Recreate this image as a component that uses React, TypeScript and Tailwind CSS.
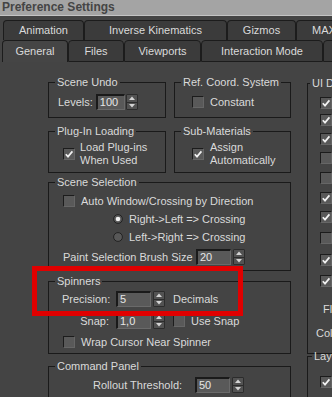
import React from "react";

function CheckBox({ checked }: { checked?: boolean }) {
  return (
    <span className="relative block w-[12px] h-[12px] shrink-0 bg-[#595959] border border-[#1c1c1c] border-r-[#666666] border-b-[#666666]">
      {checked && (
        <svg viewBox="0 0 10 10" className="absolute inset-0 w-[10px] h-[10px]">
          <path d="M1.8 5.2 L4 7.6 L8.4 2.4" stroke="#f2f2f2" strokeWidth="1.7" fill="none" />
        </svg>
      )}
    </span>
  );
}

function Radio({ on }: { on?: boolean }) {
  return (
    <svg width="10" height="10" viewBox="0 0 10 10" className="shrink-0 block">
      <circle cx="5" cy="5" r="4.4" fill="#585858" stroke="#222222" strokeWidth="1" />
      {on && <circle cx="5" cy="5" r="2.3" fill="#f0f0f0" />}
    </svg>
  );
}

function Field({ value, cls }: { value: string; cls: string }) {
  return (
    <div
      className={`h-[16px] shrink-0 flex items-center bg-[#595959] border-t-2 border-l-2 border-r border-b border-[#1a1a1a] border-r-[#6a6a6a] border-b-[#6a6a6a] pl-[2px] text-[#e6e6e6] ${cls}`}
    >
      {value}
    </div>
  );
}

function Spinner({ cls }: { cls: string }) {
  return (
    <div className={`w-[12px] h-[16px] shrink-0 flex flex-col border border-[#2c2c2c] bg-[#525252] rounded-[1px] ${cls}`}>
      <div className="flex-1 flex items-center justify-center border-b border-[#2c2c2c]">
        <svg width="6" height="4" viewBox="0 0 6 4" className="block">
          <path d="M0 4 L3 0.5 L6 4 Z" fill="#d4d4d4" />
        </svg>
      </div>
      <div className="flex-1 flex items-center justify-center">
        <svg width="6" height="4" viewBox="0 0 6 4" className="block">
          <path d="M0 0 L6 0 L3 3.5 Z" fill="#d4d4d4" />
        </svg>
      </div>
    </div>
  );
}

function Group({
  title,
  cls,
  legendCls,
  children,
}: {
  title: string;
  cls: string;
  legendCls?: string;
  children?: React.ReactNode;
}) {
  return (
    <fieldset className={`border border-[#1a1a1a] min-w-0 shrink-0 ${cls}`}>
      <legend className={`leading-[12px] px-[2px] whitespace-nowrap ${legendCls ?? "ml-[6px]"}`}>{title}</legend>
      {children}
    </fieldset>
  );
}

function Tab({ label, cls, selected }: { label: string; cls: string; selected?: boolean }) {
  return (
    <div
      className={`shrink-0 flex items-center justify-center rounded-t-[4px] border-t border-l border-r border-[#1c1c1c] whitespace-nowrap ${
        selected ? "bg-[#454545]" : "bg-[#3b3b3b]"
      } ${cls}`}
    >
      {label}
    </div>
  );
}

const uiItems: { checked: boolean; mt: string }[] = [
  { checked: true, mt: "mt-[8px]" },
  { checked: true, mt: "mt-[5px]" },
  { checked: true, mt: "mt-[7px]" },
  { checked: false, mt: "mt-[7px]" },
  { checked: false, mt: "mt-[8px]" },
  { checked: true, mt: "mt-[8px]" },
  { checked: true, mt: "mt-[7px]" },
  { checked: false, mt: "mt-[9px]" },
  { checked: true, mt: "mt-[10px]" },
  { checked: true, mt: "mt-[9px]" },
];

export default function App() {
  return (
    <div className="relative w-[332px] h-[397px] overflow-hidden bg-[#444444] font-['Liberation_Sans',Arial,sans-serif] text-[11px] leading-[13px] text-[#dadada]">
      {/* title bar */}
      <div className="h-[16px] bg-[#a4a4a4] border-b border-[#c4c4c4] pl-[2px] flex items-center text-[12px] font-bold text-[#454545] whitespace-nowrap">
        Preference Settings
      </div>

      {/* tab rows */}
      <div className="flex h-[20px] mt-[4px] pl-[3px]">
        <Tab label="Animation" cls="w-[81px]" />
        <Tab label="Inverse Kinematics" cls="w-[143px]" />
        <Tab label="Gizmos" cls="w-[69px]" />
        <Tab label="MAXScript" cls="w-[84px]" />
      </div>
      <div className="flex h-[22px] pl-[2px]">
        <Tab label="General" cls="w-[66px]" selected />
        <Tab label="Files" cls="w-[56px] border-b" />
        <Tab label="Viewports" cls="w-[77px] border-b" />
        <Tab label="Interaction Mode" cls="w-[122px] border-b" />
        <Tab label="" cls="w-[60px] border-b" />
      </div>

      {/* content */}
      <div className="flex pl-[48px] pt-[14px]">
        <div className="w-[243px] shrink-0 flex flex-col">
          <div className="flex gap-[8px]">
            <Group title="Scene Undo" cls="w-[118px]">
              <div className="pt-[6px] pb-[7px] pl-[9px]">
                <div className="h-[16px] flex items-center">
                  <span>Levels:</span>
                  <Field value="100" cls="w-[29px] ml-[3px]" />
                  <Spinner cls="ml-[1px]" />
                </div>
              </div>
            </Group>
            <Group title="Ref. Coord. System" cls="w-[117px]">
              <div className="pt-[6px] pb-[7px] pl-[17px]">
                <div className="h-[16px] flex items-center">
                  <CheckBox />
                  <span className="ml-[6px]">Constant</span>
                </div>
              </div>
            </Group>
          </div>

          <div className="flex gap-[8px] mt-[7px]">
            <Group title="Plug-In Loading" cls="w-[118px]">
              <div className="pt-[4px] pb-[5px] pl-[14px] flex items-center">
                <CheckBox checked />
                <div className="ml-[5px]">
                  <div>Load Plug-ins</div>
                  <div>When Used</div>
                </div>
              </div>
            </Group>
            <Group title="Sub-Materials" cls="w-[117px]">
              <div className="pt-[4px] pb-[5px] pl-[17px] flex items-center">
                <CheckBox checked />
                <div className="ml-[6px]">
                  <div>Assign</div>
                  <div>Automatically</div>
                </div>
              </div>
            </Group>
          </div>

          <Group title="Scene Selection" cls="w-[243px] mt-[3px]">
            <div className="pt-[4px] pb-[4px] pl-[14px]">
              <div className="h-[18px] flex items-center">
                <CheckBox />
                <span className="ml-[6px] whitespace-nowrap">Auto Window/Crossing by Direction</span>
              </div>
              <div className="h-[18px] flex items-center pl-[50px]">
                <Radio on />
                <span className="ml-[6px] whitespace-nowrap">Right-&gt;Left =&gt; Crossing</span>
              </div>
              <div className="h-[18px] flex items-center pl-[50px]">
                <Radio />
                <span className="ml-[6px] whitespace-nowrap">Left-&gt;Right =&gt; Crossing</span>
              </div>
              <div className="h-[18px] mt-[2px] flex items-center">
                <span className="w-[133px] shrink-0 whitespace-nowrap">Paint Selection Brush Size</span>
                <Field value="20" cls="w-[35px]" />
                <Spinner cls="ml-[2px]" />
              </div>
            </div>
          </Group>

          <Group title="Spinners" cls="w-[243px] mt-[4px]">
            <div className="pt-[4px] pb-[3px] pl-[13px]">
              <div className="h-[16px] flex items-center">
                <span className="w-[47px] shrink-0 text-right">Precision:</span>
                <Field value="5" cls="w-[35px] ml-[7px]" />
                <Spinner cls="ml-[2px]" />
                <span className="ml-[8px]">Decimals</span>
              </div>
              <div className="h-[16px] mt-[6px] flex items-center">
                <span className="w-[47px] shrink-0 text-right">Snap:</span>
                <Field value="1,0" cls="w-[35px] ml-[7px]" />
                <Spinner cls="ml-[2px]" />
                <span className="ml-[8px]">
                  <CheckBox />
                </span>
                <span className="ml-[6px]">Use Snap</span>
              </div>
              <div className="h-[16px] mt-[5px] pl-[1px] flex items-center">
                <CheckBox />
                <span className="ml-[6px] whitespace-nowrap">Wrap Cursor Near Spinner</span>
              </div>
            </div>
          </Group>

          <Group title="Command Panel" cls="w-[243px] mt-[6px]">
            <div className="pt-[5px] pb-[30px] pl-[44px]">
              <div className="h-[16px] flex items-center">
                <span className="w-[102px] shrink-0 whitespace-nowrap">Rollout Threshold:</span>
                <Field value="50" cls="w-[35px]" />
                <Spinner cls="ml-[2px]" />
              </div>
            </div>
          </Group>
        </div>

        <div className="ml-[16px] w-[140px] shrink-0 flex flex-col">
          <Group title="UI Display" cls="w-[140px] h-[277px] mt-[1px]" legendCls="ml-[2px]">
            <div className="pl-[12px]">
              {uiItems.map((it, i) => (
                <div key={i} className={`h-[12px] flex items-center ${it.mt}`}>
                  <CheckBox checked={it.checked} />
                </div>
              ))}
              <div className="mt-[16px] pl-[3px] whitespace-nowrap">Flyout Time:</div>
              <div className="mt-[11px] -ml-[4px] whitespace-nowrap">Color Selector:</div>
            </div>
          </Group>
          <Group title="Layer Defaults" cls="w-[140px] -mt-[4px] h-[60px]" legendCls="ml-[4px]">
            <div className="pl-[12px] pt-[14px]">
              <div className="h-[12px] flex items-center">
                <CheckBox checked />
              </div>
            </div>
          </Group>
        </div>
      </div>

      {/* red annotation frame */}
      <div className="absolute left-[32px] top-[266px] w-[211px] h-[50px] border-[5px] border-[#e00000]" />
    </div>
  );
}
